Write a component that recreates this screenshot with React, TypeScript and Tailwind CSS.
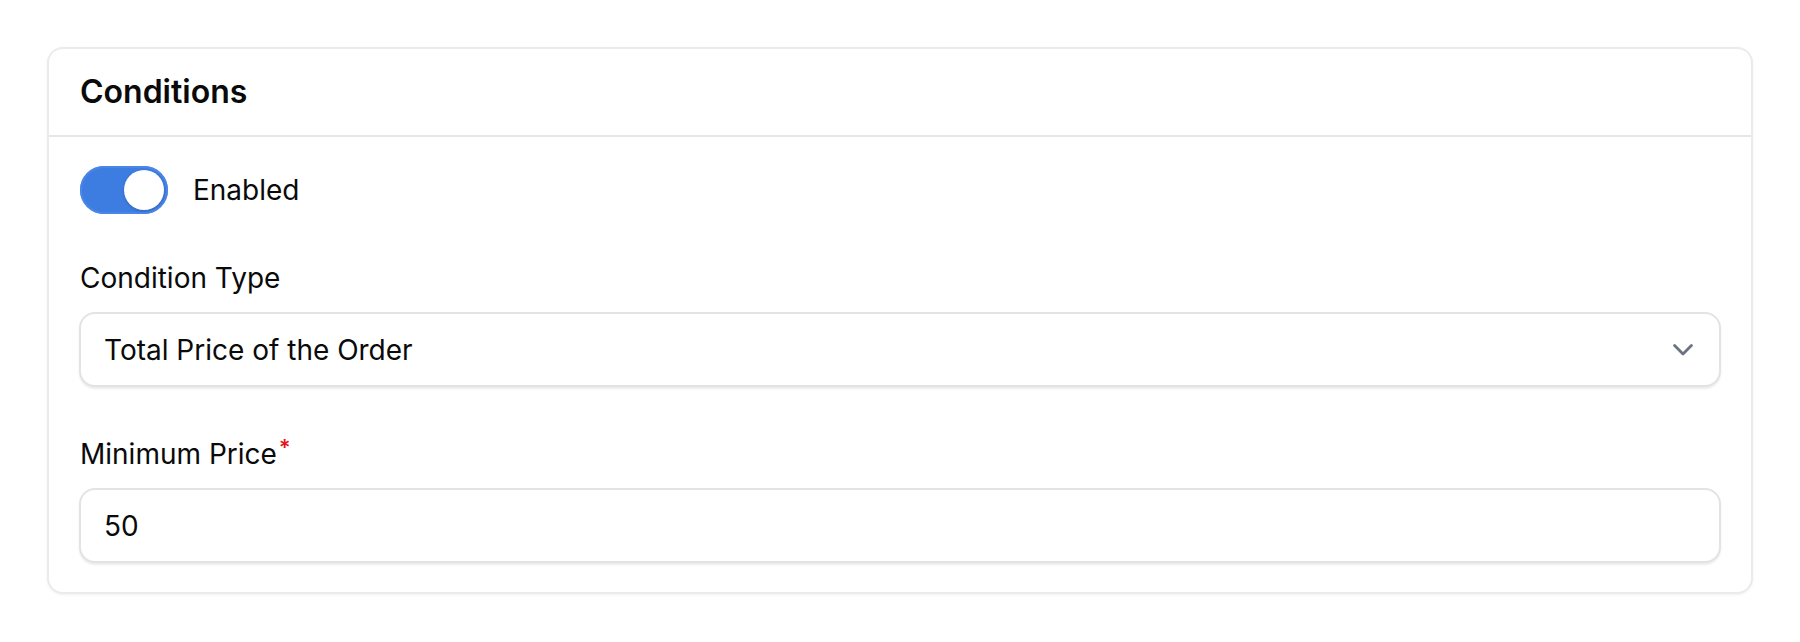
import React from 'react';

// Chevron for the select box
const Chevron = () => (
  <svg width="20" height="12" viewBox="0 0 20 12" fill="none">
    <polyline
      points="1.6,1.6 10,10 18.4,1.6"
      stroke="#6b7280"
      strokeWidth="2.8"
      strokeLinecap="round"
      strokeLinejoin="round"
    />
  </svg>
);

// Toggle switch (on state)
const Toggle = () => (
  <button
    type="button"
    className="flex h-[48px] w-[88px] items-center justify-end rounded-full bg-[#3d7ce0] p-[4px] shadow-[inset_0_0_0_2px_#4a86e6]"
  >
    <span className="h-[40px] w-[40px] rounded-full bg-white shadow-[0_1px_3px_rgba(0,0,0,0.2)]" />
  </button>
);

const App = () => {
  return (
    <div className="min-h-screen bg-white px-[47px] pt-[47px] font-['Inter','Noto_Sans',sans-serif] text-[#0a0a0a]">
      <div className="rounded-[16px] border-2 border-[#ebebeb] bg-white shadow-[0_1px_3px_rgba(0,0,0,0.06)]">
        {/* Header */}
        <div className="border-b-2 border-[#e6e6e6] px-[31px] py-[19px]">
          <h2 className="text-[32px] font-semibold leading-[48px]">Conditions</h2>
        </div>

        {/* Body */}
        <div className="flex flex-col px-[30px] pb-[29px] pt-[29px]">
          <div className="flex items-center gap-[25px] pl-[1px]">
            <Toggle />
            <span className="text-[28px] leading-[40px]">Enabled</span>
          </div>

          <div className="mt-[44px] flex flex-col gap-[14px]">
            <label className="pl-[1px] text-[28px] leading-[40px]">Condition Type</label>
            <div className="flex h-[75px] items-center justify-between rounded-[16px] border-2 border-[#e3e3e3] bg-white pl-[23px] pr-[26px] shadow-[0_2px_2px_rgba(0,0,0,0.08)]">
              <span className="text-[28px]">Total Price of the Order</span>
              <Chevron />
            </div>
          </div>

          <div className="mt-[47px] flex flex-col gap-[14px]">
            <label className="h-[40px] pl-[1px] text-[28px] leading-[40px]">
              Minimum Price
              <span className="relative -top-[9px] ml-[2px] text-[22px] font-semibold leading-none text-[#e5141b]">*</span>
            </label>
            <div className="flex h-[75px] items-center rounded-[16px] border-2 border-[#e3e3e3] bg-white pl-[23px] shadow-[0_2px_2px_rgba(0,0,0,0.08)]">
              <span className="text-[28px]">50</span>
            </div>
          </div>
        </div>
      </div>
    </div>
  );
};

export default App;
